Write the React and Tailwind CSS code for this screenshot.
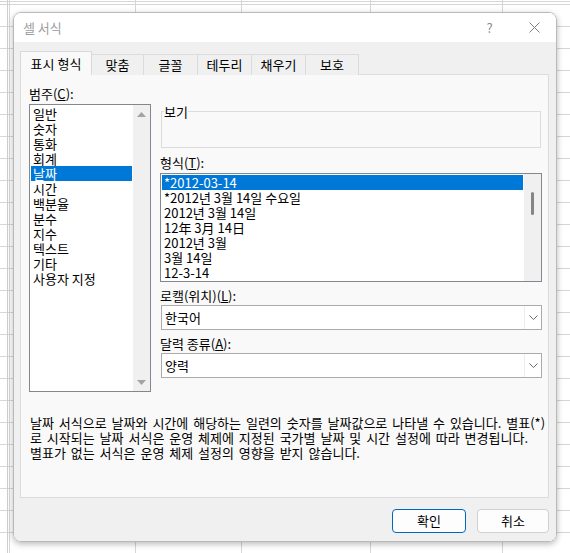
import React from "react";

const categories = ["일반", "숫자", "통화", "회계", "날짜", "시간", "백분율", "분수", "지수", "텍스트", "기타", "사용자 지정"];
const formats = ["*2012-03-14", "*2012년 3월 14일 수요일", "2012년 3월 14일", "12年 3月 14日", "2012년 3월", "3월 14일", "12-3-14"];
const tabs = [
  { label: "맞춤", w: "w-[52px]" },
  { label: "글꼴", w: "w-[54px]" },
  { label: "테두리", w: "w-[54px]" },
  { label: "채우기", w: "w-[54px]" },
  { label: "보호", w: "w-[53px]" },
];

function Chevron() {
  return (
    <svg width="9" height="5" viewBox="0 0 9 5" fill="none">
      <path d="M0.5 0.5 L4.5 4.5 L8.5 0.5" stroke="#6b6b6b" strokeWidth="1" />
    </svg>
  );
}

function Dropdown({ value }) {
  return (
    <div className="ml-[1px] h-[25px] border border-[#ababab] bg-white flex">
      <div className="flex-1 pl-[3px] leading-[23px]">{value}</div>
      <div className="w-[17px] border-l border-[#ececec] flex items-center justify-center">
        <Chevron />
      </div>
    </div>
  );
}

export default function App() {
  return (
    <div className="w-[570px] h-[553px] bg-white bg-[image:repeating-linear-gradient(180deg,#d6d6d6_0px,#d6d6d6_1px,transparent_1px,transparent_22px)] bg-[position:0_4px] font-['Noto_Sans_CJK_KR','Noto_Sans',sans-serif] text-[13px] text-black overflow-hidden">
      <div className="h-full pt-[12px] pl-[13px] bg-[image:linear-gradient(90deg,transparent_7px,#cfcfcf_7px,#cfcfcf_8px,transparent_8px,transparent_9px,#d6d6d6_9px,#d6d6d6_10px,transparent_10px,transparent_135px,#d6d6d6_135px,#d6d6d6_136px,transparent_136px,transparent_241px,#d6d6d6_241px,#d6d6d6_242px,transparent_242px,transparent_370px,#d6d6d6_370px,#d6d6d6_371px,transparent_371px,transparent_502px,#d6d6d6_502px,#d6d6d6_503px,transparent_503px)]">
        {/* Dialog */}
        <div className="w-[544px] h-[530px] rounded-[8px] border border-[#b9b9b9] overflow-hidden shadow-[0_2px_6px_rgba(0,0,0,0.28)] flex flex-col">
          {/* Title bar */}
          <div className="h-[29px] bg-white flex items-center">
            <div className="flex-1 pl-[9px] text-[#9d9d9d]">셀 서식</div>
            <div className="w-[45px] h-full flex items-center justify-center text-[#8a8a8a]">?</div>
            <div className="w-[44px] h-full flex items-center justify-center">
              <svg width="11" height="11" viewBox="0 0 11 11">
                <path d="M0.5 0.5 L10.5 10.5 M10.5 0.5 L0.5 10.5" stroke="#7d7d7d" strokeWidth="1" />
              </svg>
            </div>
          </div>

          {/* Body */}
          <div className="flex-1 bg-[#f0f0f0] pt-[9px] pl-[6px] pr-[7px] pb-[8px] flex flex-col">
            {/* Tabs */}
            <div className="flex items-end h-[24px] -mb-px relative z-10">
              <div className="w-[72px] h-[24px] bg-[#f9f9f9] border border-b-0 border-[#dadada] flex items-center justify-center">
                표시 형식
              </div>
              {tabs.map((t) => (
                <div
                  key={t.label}
                  className={`${t.w} h-[21px] bg-[#f0f0f0] border-t border-r border-[#dcdcdc] flex items-center justify-center`}
                >
                  {t.label}
                </div>
              ))}
            </div>

            {/* Panel */}
            <div className="h-[424px] bg-[#f9f9f9] border border-[#dcdcdc] pt-[11px] pl-[8px] pr-[6px]">
              <div className="flex gap-[9px] items-start">
                {/* Category */}
                <div className="w-[122px]">
                  <div className="h-[15px] leading-[15px]">
                    범주(<span className="underline">C</span>):
                  </div>
                  <div className="mt-[3px] h-[288px] border border-[#828790] bg-white flex">
                    <div className="flex-1 p-[1px]">
                      {categories.map((c) => (
                        <div
                          key={c}
                          className={`h-[15px] leading-[15px] pl-[2px] whitespace-nowrap ${c === "날짜" ? "bg-[#0078d7] text-white" : ""}`}
                        >
                          {c}
                        </div>
                      ))}
                    </div>
                    <div className="w-[17px] bg-[#f0f0f0] flex flex-col items-center justify-between pt-[7px] pb-[6px]">
                      <svg width="9" height="5" viewBox="0 0 9 5">
                        <path d="M4.5 0 L9 5 L0 5 Z" fill="#a3a3a3" />
                      </svg>
                      <svg width="9" height="5" viewBox="0 0 9 5">
                        <path d="M0 0 L9 0 L4.5 5 Z" fill="#a3a3a3" />
                      </svg>
                    </div>
                  </div>
                </div>

                {/* Right column */}
                <div className="flex-1 pt-[18px]">
                  <fieldset className="mx-[1px] h-[44px] border border-[#dcdcdc]">
                    <legend className="ml-[2px] leading-[15px]">보기</legend>
                  </fieldset>

                  <div className="mt-[7px] h-[15px] leading-[15px]">
                    형식(<span className="underline">T</span>):
                  </div>
                  <div className="mt-[3px] h-[109px] border border-[#828790] bg-white flex">
                    <div className="flex-1 p-[1px]">
                      {formats.map((f, i) => (
                        <div
                          key={f}
                          className={`h-[15px] leading-[15px] pl-[2px] whitespace-nowrap ${i === 0 ? "bg-[#0078d7] text-white" : ""}`}
                        >
                          {f}
                        </div>
                      ))}
                    </div>
                    <div className="w-[17px] bg-[#f0f0f0] pt-[18px] pl-[7px]">
                      <div className="w-[3px] h-[23px] rounded-full bg-[#858585]" />
                    </div>
                  </div>

                  <div className="mt-[6px] h-[15px] leading-[15px]">
                    로캘(위치)(<span className="underline">L</span>):
                  </div>
                  <div className="mt-[2px]">
                    <Dropdown value="한국어" />
                  </div>

                  <div className="mt-[6px] h-[15px] leading-[15px]">
                    달력 종류(<span className="underline">A</span>):
                  </div>
                  <div className="mt-[2px]">
                    <Dropdown value="양력" />
                  </div>
                </div>
              </div>

              <p className="mt-[23px] pl-[1px] leading-[15px] whitespace-nowrap [word-spacing:2px]">
                날짜 서식으로 날짜와 시간에 해당하는 일련의 숫자를 날짜값으로 나타낼 수 있습니다. 별표(*)
                <br />
                로 시작되는 날짜 서식은 운영 체제에 지정된 국가별 날짜 및 시간 설정에 따라 변경됩니다.
                <br />
                별표가 없는 서식은 운영 체제 설정의 영향을 받지 않습니다.
              </p>
            </div>

            {/* Buttons */}
            <div className="mt-[11px] flex justify-end gap-[11px]">
              <button className="w-[74px] h-[24px] rounded-[4px] border border-[#0067c0] bg-[#fdfdfd]">확인</button>
              <button className="w-[72px] h-[24px] rounded-[4px] border border-[#d0d0d0] bg-[#fdfdfd]">취소</button>
            </div>
          </div>
        </div>
      </div>
    </div>
  );
}
